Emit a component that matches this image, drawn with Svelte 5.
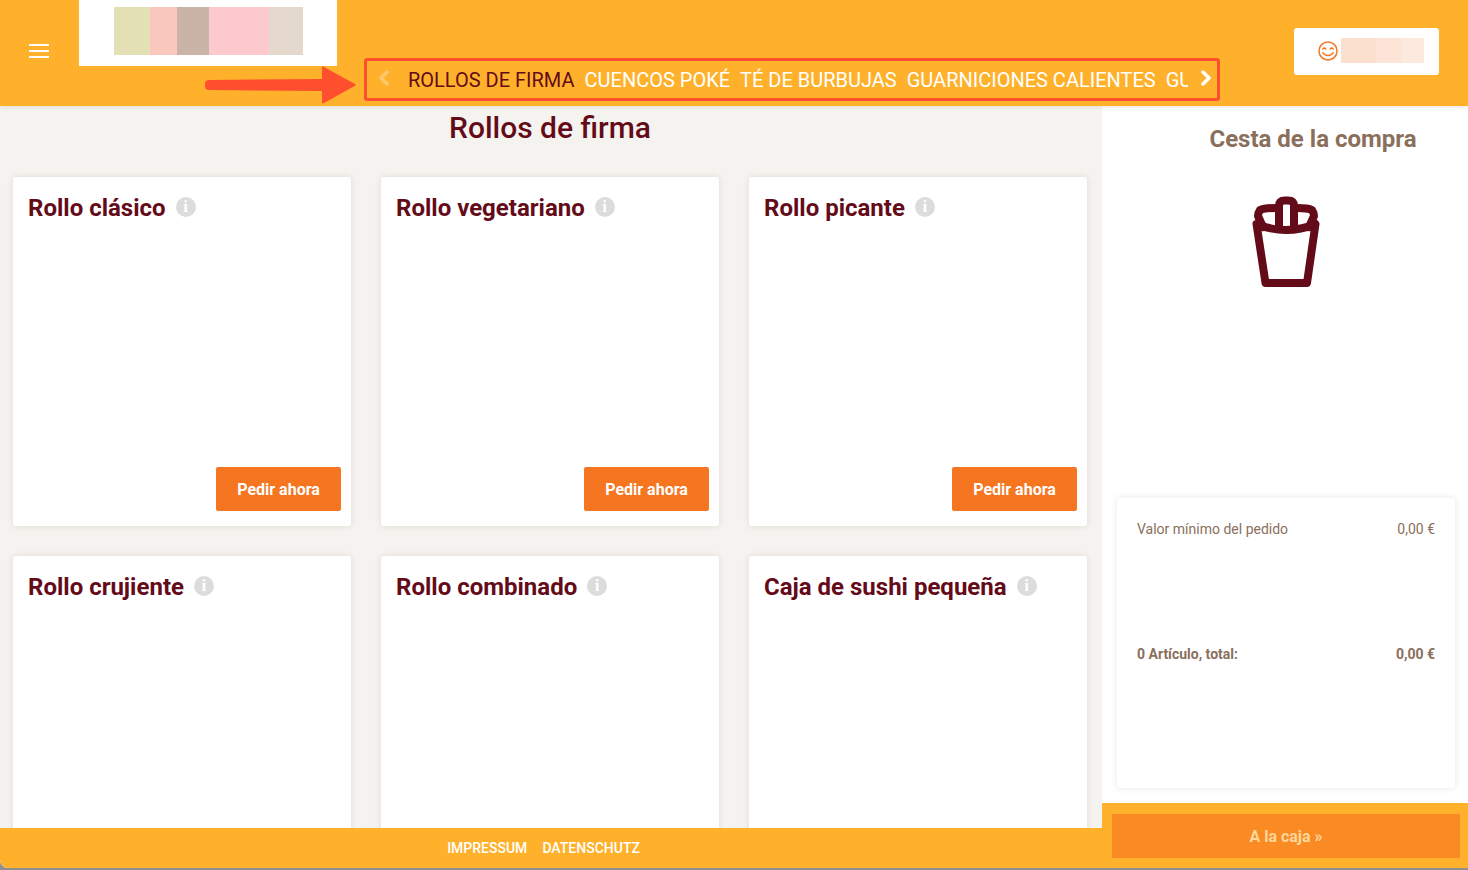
<script lang="ts">
  const categories = ['ROLLOS DE FIRMA', 'CUENCOS POKÉ', 'TÉ DE BURBUJAS', 'GUARNICIONES CALIENTES', 'GUARNICIONES FRÍAS'];
  const products = ['Rollo clásico', 'Rollo vegetariano', 'Rollo picante', 'Rollo crujiente', 'Rollo combinado', 'Caja de sushi pequeña'];
</script>

<div class="page">
  <div class="shell">
    <header class="topbar">
      <button class="burger" aria-label="Menú"><span></span><span></span><span></span></button>
      <div class="logo">
        <div class="logo-art">
          <i class="l1"></i><i class="l2"></i><i class="l3"></i><i class="l4"></i><i class="l5"></i>
        </div>
      </div>
      <nav class="cats">
        <svg class="chev faded" viewBox="0 0 12 16" width="12" height="16"><path d="M9 2 3 8l6 6" /></svg>
        <div class="cat-list">
          {#each categories as c, i}
            <span class:active={i === 0}>{c}</span>
          {/each}
        </div>
        <svg class="chev" viewBox="0 0 12 16" width="12" height="16"><path d="m3 2 6 6-6 6" /></svg>
      </nav>
      <div class="user">
        <svg viewBox="0 0 20 20" width="20" height="20" class="smile">
          <circle cx="10" cy="10" r="9" />
          <path d="M4.800 8q1.500-2 3 0M12.200 8q1.500-2 3 0" />
          <path d="M4.800 11.800q5.200 5.600 10.400 0" />
        </svg>
        <div class="user-name"><i class="u1"></i><i class="u2"></i><i class="u3"></i></div>
      </div>
      <svg class="pointer" viewBox="0 0 152 38" width="152" height="38">
        <path d="M4 14 117 13V1.500a1 1 0 0 1 1.500-.8L150 18a1 1 0 0 1 0 1.800L118.500 37.300a1 1 0 0 1-1.500-.8V25L4 24a4 4 0 0 1-4-4v-2a4 4 0 0 1 4-4z" />
      </svg>
    </header>

    <div class="body">
      <div class="left">
        <main class="content">
          <h1>Rollos de firma</h1>
          <div class="grid">
            {#each products as p, i}
              <article class="card">
                <h2>{p}<span class="info">i</span></h2>
                {#if i < 3}
                  <button class="order">Pedir ahora</button>
                {/if}
              </article>
            {/each}
          </div>
        </main>
        <footer class="foot">
          <a href="#impressum">IMPRESSUM</a>
          <a href="#datenschutz">DATENSCHUTZ</a>
        </footer>
      </div>

      <aside class="cart">
        <h3>Cesta de la compra</h3>
        <div class="cart-icon">
          <svg viewBox="0 0 72 95" width="72" height="95">
            <path d="M6.500 29Q36 41 65.500 29L57 88H15.500Z" />
            <path d="M29 34V11Q29 5.500 35 5.500H38Q44 5.500 44 11V34" />
            <path d="M26 13Q14 13 10 15Q8 18 8 21L13 32" />
            <path d="M47 13Q58 13 62 15Q64 18 64 21L59 32" />
          </svg>
        </div>
        <div class="summary">
          <div class="row"><span>Valor mínimo del pedido</span><span>0,00 €</span></div>
          <div class="row total"><span>0 Artículo, total:</span><span>0,00 €</span></div>
        </div>
        <div class="checkout">
          <button>A la caja »</button>
        </div>
      </aside>
    </div>
  </div>
</div>

<style>
  :global(body) {
    margin: 0;
    font-family: Roboto, "Liberation Sans", sans-serif;
  }
  button { font-family: inherit; border: none; cursor: pointer; }
  .page { height: 870px; background: #8f8f8f; overflow: hidden; }
  .shell {
    height: 868px;
    display: flex;
    flex-direction: column;
    border-radius: 0 0 0 8px;
    overflow: hidden;
    background: #f5f3ef;
  }

  .topbar {
    position: relative;
    z-index: 2;
    flex: 0 0 106px;
    display: flex;
    background: #ffb12b;
    box-shadow: 0 1px 4px rgba(90, 60, 30, 0.12);
  }
  .burger {
    flex: 0 0 20px;
    margin: 44px 30px 0 29px;
    height: 14px;
    padding: 0;
    background: none;
    display: flex;
    flex-direction: column;
    justify-content: space-between;
  }
  .burger span { display: block; height: 2px; background: #fff; }
  .logo {
    flex: 0 0 258px;
    height: 66px;
    background: #fff;
    padding: 7px 34px 11px 35px;
    box-sizing: border-box;
  }
  .logo-art { display: flex; height: 48px; }
  .logo-art i { display: block; }
  .l1 { width: 36px; background: #e2e0b4; }
  .l2 { width: 27px; background: #f9c7bd; }
  .l3 { width: 32px; background: #c9b4a5; }
  .l4 { width: 60px; background: #fcc9ce; }
  .l5 { width: 34px; background: #e5d9cd; }

  .cats {
    flex: 0 0 856px;
    min-width: 0;
    box-sizing: border-box;
    height: 43px;
    margin: 58px 0 0 27px;
    border: 3px solid #ff4f2e;
    border-radius: 3px;
    display: flex;
    align-items: center;
    padding: 0 5px 0 11px;
  }
  .chev { flex: none; fill: none; stroke: #fff; stroke-width: 3.500; stroke-linecap: round; stroke-linejoin: round; margin-top: -3px; }
  .chev.faded { opacity: 0.3; }
  .cat-list {
    flex: 1;
    min-width: 0;
    margin: 0 12px 0 18px;
    display: flex;
    gap: 10px;
    overflow: hidden;
    white-space: nowrap;
    font-size: 20px;
    color: #fff;
    line-height: 26px;
  }
  .cat-list .active { color: #640b19; }

  .user {
    position: absolute;
    top: 28px;
    right: 29px;
    width: 145px;
    height: 47px;
    box-sizing: border-box;
    background: #fff;
    border-radius: 3px;
    display: flex;
    align-items: center;
    padding-left: 24px;
    gap: 3px;
  }
  .smile { fill: none; stroke: #f57520; stroke-width: 1.500; stroke-linecap: round; margin-bottom: 1px; }
  .user-name { display: flex; height: 25px; margin-top: -2px; }
  .user-name i { display: block; }
  .u1 { width: 35px; background: #fbe0cf; }
  .u2 { width: 26px; background: #fce5d7; }
  .u3 { width: 22px; background: #fdeadf; }

  .pointer { position: absolute; left: 205px; top: 66px; fill: #ff4f2e; }

  .body { flex: 1; min-height: 0; display: flex; }
  .left { flex: 0 0 1102px; display: flex; flex-direction: column; min-height: 0; }
  .content { flex: 1; min-height: 0; overflow: hidden; padding: 0 15px 0 13px; }
  h1 {
    margin: 5px 0 32px;
    height: 34px;
    line-height: 34px;
    text-align: center;
    font-size: 30px;
    font-weight: 500;
    color: #640b19;
  }
  .grid { display: grid; grid-template-columns: repeat(3, 338px); gap: 30px; }
  .card {
    position: relative;
    height: 349px;
    background: #fff;
    border-radius: 3px;
    box-shadow: 0 0 6px rgba(90, 60, 30, 0.12);
  }
  .card h2 {
    margin: 0;
    padding: 17px 15px 0;
    display: flex;
    align-items: center;
    gap: 10px;
    font-size: 24px;
    line-height: 28px;
    font-weight: 700;
    color: #640b19;
  }
  .info {
    width: 20px;
    height: 20px;
    margin-top: -2px;
    border-radius: 50%;
    background: #dcdcdc;
    color: #fff;
    font: 700 17px/20px "Liberation Serif", serif;
    text-align: center;
  }
  .order {
    position: absolute;
    right: 10px;
    bottom: 15px;
    width: 125px;
    height: 44px;
    border-radius: 2px;
    background: #f57520;
    color: #fff;
    font-size: 16px;
    font-weight: 700;
  }
  .foot {
    flex: 0 0 40px;
    box-sizing: border-box;
    background: #ffb12b;
    display: flex;
    justify-content: center;
    align-items: center;
    gap: 15px;
    padding-right: 15px;
  }
  .foot a { color: #fff; font-size: 14px; font-weight: 500; text-decoration: none; }

  .cart { flex: 1; background: #fff; display: flex; flex-direction: column; min-width: 0; position: relative; }
  .cart h3 {
    margin: 19px 0 0 56px;
    text-align: center;
    font-size: 24px;
    line-height: 28px;
    font-weight: 700;
    color: #8a6f5c;
  }
  .cart-icon { flex: none; height: 95px; margin: 42px 0 0 148px; }
  .cart-icon svg { fill: none; stroke: #640b19; stroke-width: 8; stroke-linejoin: round; stroke-linecap: round; }
  .summary {
    flex: none;
    box-sizing: border-box;
    height: 290px;
    margin: 208px 13px 0 15px;
    padding: 22px 20px;
    border-radius: 3px;
    box-shadow: 0 0 6px rgba(90, 60, 30, 0.12);
    color: #8a6f5c;
    font-size: 14px;
  }
  .row { display: flex; justify-content: space-between; line-height: 18px; }
  .row.total { margin-top: 107px; font-weight: 700; }
  .checkout {
    margin-top: 15px;
    flex: 1;
    background: #ffb12b;
    padding: 11px 8px 10px 10px;
  }
  .checkout button {
    display: block;
    width: 100%;
    height: 44px;
    background: #f98a24;
    color: #ffd79a;
    font-size: 16px;
    font-weight: 700;
  }
</style>
